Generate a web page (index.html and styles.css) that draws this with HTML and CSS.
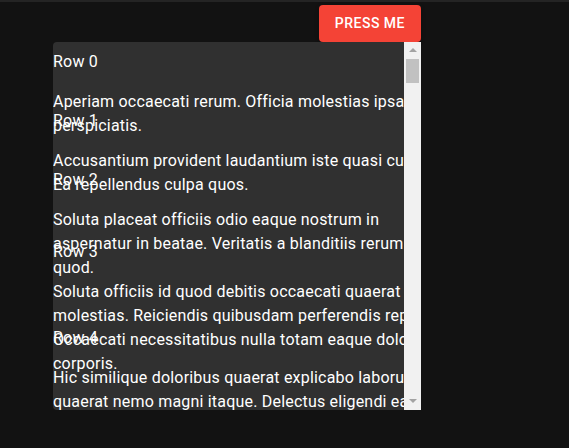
FILE: index.html
```html
<!DOCTYPE html>
<html lang="en">
<head>
    <meta charset="UTF-8">
    <meta name="viewport" content="width=device-width, initial-scale=1.0">
    <title>Liste virtuelle</title>
    <link rel="stylesheet" href="styles.css">
</head>
<body>
    <div class="container">
        <button class="press-btn" type="button">Press me</button>

        <div class="list">
            <!-- Lignes visibles -->
            <div class="list-view">
                <div class="row row-0">
                    <div class="row-title">Row 0</div>
                    <p>Aperiam occaecati rerum. Officia molestias ipsam perspiciatis.</p>
                </div>
                <div class="row row-1">
                    <div class="row-title">Row 1</div>
                    <p>Accusantium provident laudantium iste quasi cumque. Ea repellendus culpa quos.</p>
                </div>
                <div class="row row-2">
                    <div class="row-title">Row 2</div>
                    <p>Soluta placeat officiis odio eaque nostrum in aspernatur in beatae. Veritatis a blanditiis rerum sint quod.</p>
                </div>
                <div class="row row-3">
                    <div class="row-title">Row 3</div>
                    <p>Soluta officiis id quod debitis occaecati quaerat molestias. Reiciendis quibusdam perferendis repellat. Occaecati necessitatibus nulla totam eaque dolorem corporis.</p>
                </div>
                <div class="row row-4">
                    <div class="row-title">Row 4</div>
                    <p>Hic similique doloribus quaerat explicabo laborum quaerat nemo magni itaque. Delectus eligendi eaque sint.</p>
                </div>
            </div>

            <!-- Barre de défilement -->
            <div class="scrollbar">
                <div class="scroll-btn"><span class="arrow-up"></span></div>
                <div class="scroll-track">
                    <div class="scroll-thumb"></div>
                </div>
                <div class="scroll-btn"><span class="arrow-down"></span></div>
            </div>
        </div>
    </div>
</body>
</html>
```

FILE: styles.css
```css
body {
    font-family: Roboto, "Liberation Sans", sans-serif;
    margin: 0;
    background-color: #121212;
    border-top: 2px solid #242424;
    color: #fff;
}
.container {
    width: 368px;
    margin-left: 53px;
    padding-top: 3px;
    display: flex;
    flex-direction: column;
}
.press-btn {
    align-self: flex-end;
    background-color: #f44336;
    color: #fff;
    font-family: Roboto, "Liberation Sans", sans-serif;
    font-size: 14px;
    font-weight: 500;
    line-height: 1.75;
    letter-spacing: 0.5px;
    text-transform: uppercase;
    padding: 6px 16px;
    border: none;
    border-radius: 4px;
    cursor: pointer;
    box-shadow: 0 3px 1px -2px rgba(0,0,0,0.2), 0 2px 2px 0 rgba(0,0,0,0.14), 0 1px 5px 0 rgba(0,0,0,0.12);
}
.list {
    height: 368px;
    display: flex;
    background-color: #303030;
    border-radius: 4px 0 0 4px;
    overflow: hidden;
}
.list-view {
    flex: 1;
    overflow: hidden;
    padding-top: 8px;
    font-size: 16px;
    line-height: 24px;
    letter-spacing: 0.2px;
}
.row {
    width: 405px;
}
.row p {
    margin: 16px 0 0;
}
.row-0 { height: 59px; }
.row-1 { height: 59px; }
.row-2 { height: 72px; }
.row-3 { height: 86px; }
.row-4 { height: 80px; }
.scrollbar {
    width: 17px;
    display: flex;
    flex-direction: column;
    background-color: #f1f1f1;
}
.scroll-btn {
    height: 17px;
    display: flex;
    align-items: center;
    justify-content: center;
}
.arrow-up {
    width: 0;
    height: 0;
    border-left: 4px solid transparent;
    border-right: 4px solid transparent;
    border-bottom: 4px solid #a3a3a3;
}
.arrow-down {
    width: 0;
    height: 0;
    border-left: 4px solid transparent;
    border-right: 4px solid transparent;
    border-top: 4px solid #a3a3a3;
}
.scroll-track {
    flex: 1;
    padding: 0 2px;
}
.scroll-thumb {
    height: 24px;
    background-color: #c1c1c1;
}
```
